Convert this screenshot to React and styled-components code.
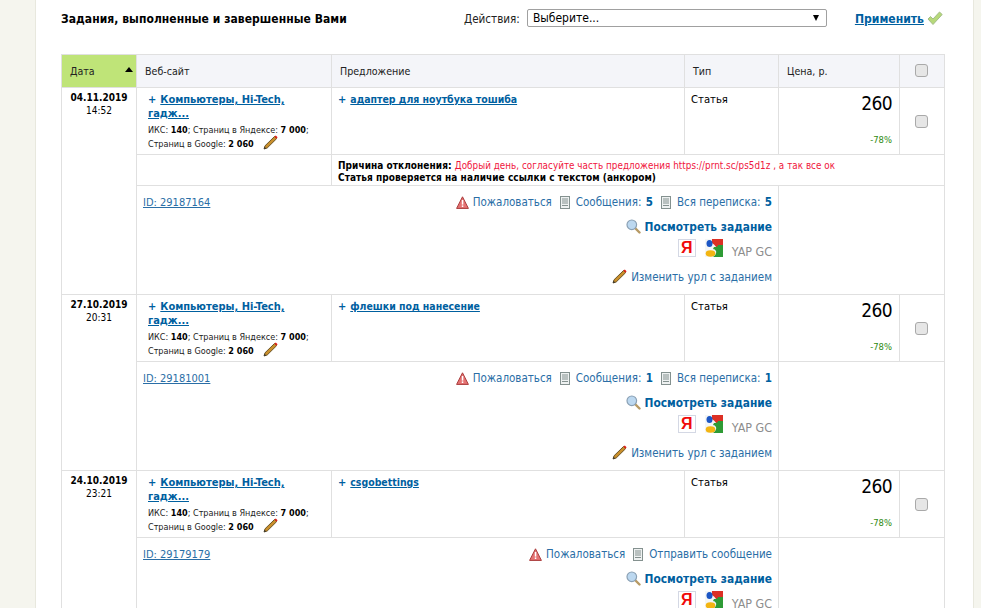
import React from 'react';
import styled, { createGlobalStyle } from 'styled-components';

const GlobalStyle = createGlobalStyle`
    html, body {
        margin: 0;
        padding: 0;
        height: 100%;
        overflow: hidden;
        background-color: #f5f5ee;
        font-family: "DejaVu Sans Condensed", "DejaVu Sans", sans-serif;
        font-stretch: condensed;
        color: #000;
    }
`;

const Page = styled.div`
    margin-left: 35px;
    width: 912px;
    height: 608px;
    overflow: hidden;
    background-color: #fff;
    border-left: 1px solid #e8e8de;
    border-right: 1px solid #e8e8de;
    padding-left: 25px;
`;

const TopBar = styled.div`
    height: 54px;
    display: flex;
    align-items: flex-start;
    padding-top: 9px;
    box-sizing: border-box;
`;

const Title = styled.div`
    width: 403px;
    padding-top: 3px;
    font-size: 12px;
    letter-spacing: 0.05px;
    font-weight: bold;
`;

const ActionLabel = styled.span`
    font-size: 11.6px;
    color: #222;
    padding-top: 3px;
    margin-right: 7px;
`;

const FakeSelect = styled.div`
    width: 300px;
    height: 18px;
    border: 1px solid #a0a0a0;
    border-radius: 2px;
    box-sizing: border-box;
    padding: 0 5px;
    display: flex;
    align-items: center;
    justify-content: space-between;
    font-size: 12px;
`;

const SelectArrow = styled.i`
    width: 0;
    height: 0;
    border-left: 3px solid transparent;
    border-right: 3px solid transparent;
    border-top: 6px solid #000;
    margin-right: 2px;
`;

const ApplyLink = styled.a`
    margin-left: 28px;
    padding-top: 3px;
    font-size: 12.1px;
    font-weight: bold;
    color: #00609f;
    text-decoration: underline;
`;

const ApplyIcon = styled.svg`
    margin: 2px 0 0 3px;
`;

const Table = styled.table`
    border-collapse: collapse;
    table-layout: fixed;
    width: 883px;
    font-size: 11px;

    td, th {
        border: 1px solid #e0e0e0;
        padding: 0;
        vertical-align: top;
        box-sizing: border-box;
    }
`;

const Head = styled.th`
    height: 33px;
    vertical-align: middle !important;
    text-align: ${({ $center }) => ($center ? 'center' : 'left')};
    font-weight: normal;
    font-size: 10.6px;
    padding-left: ${({ $center }) => ($center ? '0' : '8px')} !important;
    padding-right: ${({ $center }) => ($center ? '1px' : '0')} !important;
    padding-bottom: ${({ $center }) => ($center ? '2px' : '0')} !important;
    color: #222;
    background-color: ${({ $active }) => ($active ? '#bfe478' : '#f4f5f9')};
    position: relative;
`;

const SortArrow = styled.i`
    position: absolute;
    top: 12px;
    right: 3px;
    width: 0;
    height: 0;
    border-left: 4px solid transparent;
    border-right: 4px solid transparent;
    border-bottom: 5px solid #000;
`;

const DateCell = styled.td`
    text-align: center;
    padding-top: 3px !important;
    font-size: 10px;
    line-height: 13px;
`;

const DateText = styled.div`
    font-weight: bold;
`;

const SiteCell = styled.td`
    padding: 5px 6px 0 11px !important;
    height: 67px;
    overflow: hidden;
`;

const Plus = styled.span`
    color: #00609f;
    font-weight: bold;
    margin-right: 4px;
`;

const BoldLink = styled.a`
    color: #00609f;
    font-weight: bold;
    font-size: ${({ $small }) => ($small ? '10.45px' : '11px')};
    text-decoration: underline;
`;

const SiteName = styled.div`
    line-height: 14px;
    font-size: 11px;
`;

const Stats = styled.div`
    margin-top: 2px;
    font-size: 9px;
    line-height: 14px;
    color: #222;
    white-space: nowrap;

    b {
        color: #000;
    }

    svg {
        vertical-align: top;
        margin: -2px 0 -2px 9px;
    }
`;

const OfferCell = styled.td`
    padding: 4px 6px 0 6px !important;
    line-height: 14px;
`;

const TypeCell = styled.td`
    padding: 5px 0 0 6px !important;
    font-size: 11.2px;
    line-height: 14px;
`;

const PriceCell = styled.td`
    padding: 3px 7px 0 0 !important;
    text-align: right;
`;

const PriceValue = styled.div`
    font-size: 19px;
    letter-spacing: -0.6px;
    line-height: 24px;
`;

const Discount = styled.div`
    margin-top: 19px;
    font-size: 9.4px;
    line-height: 12px;
    color: #2f8a10;
`;

const CheckCell = styled.td`
    text-align: center;
    vertical-align: middle !important;
    padding-right: 1px !important;
`;

const Box = styled.span`
    display: inline-block;
    width: 13px;
    height: 13px;
    box-sizing: border-box;
    border: 1px solid #a9a9a9;
    border-radius: 3px;
    background-color: #e6e6e6;
    vertical-align: middle;
`;

const ReasonCell = styled.td`
    height: 31px;
    padding: 5px 0 0 6px !important;
    font-size: 10px;
    letter-spacing: 0.05px;
    line-height: 12px;
    font-weight: bold;
`;

const ReasonText = styled.span`
    font-weight: normal;
    font-size: 9.75px;
    color: #f0143c;
`;

const ActionsCell = styled.td`
    padding: 0 6px !important;
    height: 108px;
`;

const ActionsInner = styled.div`
    display: flex;
    flex-direction: column;
    height: 108px;
    font-size: 11.5px;
    color: #00609f;
`;

const TopLine = styled.div`
    display: flex;
    height: 28px;
    padding-top: 9px;
    box-sizing: border-box;
    justify-content: space-between;
    line-height: 15px;
`;

const IdLink = styled.a`
    color: #2a6ea6;
    text-decoration: underline;
    font-size: 11px;
`;

const LinkGroup = styled.div`
    display: flex;
    align-items: center;
    height: 15px;
`;

const ActionItem = styled.span`
    display: inline-flex;
    align-items: center;
    gap: ${({ $warn }) => ($warn ? '4px' : '6px')};
    margin-left: 8px;
    color: #2a6ea6;

    b {
        color: #00609f;
        margin-left: 1px;
    }
`;

const Line = styled.div`
    display: flex;
    justify-content: flex-end;
    align-items: center;
    height: 25px;
    gap: 4px;
    color: #2a6ea6;
`;

const IconLine = styled(Line)`
    gap: 9px;
    align-items: flex-start;
`;

const ViewTask = styled.b`
    color: #00609f;
    font-size: 11.85px;
`;

const YandexBox = styled.span`
    width: 18px;
    height: 18px;
    box-sizing: border-box;
    border: 1px solid #d4d8e4;
    background-color: #fff;
    color: #f00a0a;
    font: bold 16px/16px "Liberation Sans", sans-serif;
    text-align: center;
`;

const Muted = styled.span`
    color: #8d8d8d;
    font-size: 12.4px;
    margin-top: 5px;
    line-height: 15px;
`;

const rows = [
    {
        date: '04.11.2019', time: '14:52', offer: 'адаптер для ноутбука тошиба', id: '29187164',
        reason: true, messages: 5, all: 5,
    },
    {
        date: '27.10.2019', time: '20:31', offer: 'флешки под нанесение', id: '29181001',
        messages: 1, all: 1,
    },
    {
        date: '24.10.2019', time: '23:21', offer: 'csgobettings', id: '29179179',
    },
];

const Pencil = () => (
    <svg width="15" height="15" viewBox="0 0 15 15">
        <path d="M1 14 L2 10.8 L11.5 1.5 L13.6 3.7 L4.2 13 Z" fill="#c98f2c" stroke="#5f4a1c" strokeWidth="0.9" />
        <path d="M11.4 1.6 L12.8 0.4 L14.6 2.2 L13.4 3.7 Z" fill="#e0201a" />
        <path d="M1 14 L1.6 11.8 L3.2 13.4 Z" fill="#333" />
    </svg>
);

const Warning = () => (
    <svg width="13" height="13" viewBox="0 0 13 13">
        <path d="M6.5 0.8 L12.4 12.4 H0.6 Z" fill="#e57373" stroke="#a83a3a" strokeWidth="1" strokeLinejoin="round" />
        <rect x="5.8" y="4" width="1.5" height="4.6" fill="#fff" />
        <rect x="5.8" y="9.4" width="1.5" height="1.6" fill="#fff" />
    </svg>
);

const Doc = () => (
    <svg width="10" height="13" viewBox="0 0 10 13">
        <rect x="0.5" y="0.5" width="9" height="12" fill="#eef1f1" stroke="#84918f" />
        <path d="M2 3 H8 M2 5 H8 M2 7 H8 M2 9.5 H8" stroke="#84918f" strokeWidth="1" />
    </svg>
);

const Magnifier = () => (
    <svg width="15" height="15" viewBox="0 0 15 15">
        <path d="M9 9 L13.5 13.5" stroke="#b79a64" strokeWidth="2.4" strokeLinecap="round" />
        <circle cx="5.8" cy="5.8" r="4.8" fill="#bcd8f0" stroke="#8aa0b4" strokeWidth="1.2" />
    </svg>
);

const GoogleIcon = () => (
    <svg width="18" height="18" viewBox="0 0 18 18">
        <rect width="18" height="18" fill="#f4f6f6" />
        <path d="M7 0 H18 V9 H12 Q9 5 7 4 Z" fill="#dc3025" />
        <path d="M9 8 Q13 8 13 6 H18 V18 H8 Q12 15 11 12 Q10 10 8 10 Z" fill="#2e9b35" />
        <ellipse cx="4.5" cy="4.5" rx="3" ry="3.6" fill="#1c56c4" />
        <ellipse cx="5.5" cy="14.5" rx="4.8" ry="3.2" fill="#f3b512" />
    </svg>
);

const Check = () => (
    <ApplyIcon width="16" height="15" viewBox="0 0 16 15">
        <path d="M1 8 L3.5 5.5 L6 8 L12.5 1 L15.2 3.5 L6 13.5 Z" fill="#b7d97a" stroke="#a3bd88" strokeWidth="1" />
    </ApplyIcon>
);

function Row({ row }) {
    const span = row.reason ? 3 : 2;
    return (
        <>
            <tr>
                <DateCell rowSpan={span}>
                    <DateText>{row.date}</DateText>
                    {row.time}
                </DateCell>
                <SiteCell>
                    <SiteName>
                        <Plus>+</Plus>
                        <BoldLink>Компьютеры, Hi-Tech, гадж...</BoldLink>
                    </SiteName>
                    <Stats>
                        ИКС: <b>140</b>; Страниц в Яндексе: <b>7 000</b>;<br />
                        Страниц в Google: <b>2 060</b><Pencil />
                    </Stats>
                </SiteCell>
                <OfferCell>
                    <Plus>+</Plus>
                    <BoldLink $small>{row.offer}</BoldLink>
                </OfferCell>
                <TypeCell>Статья</TypeCell>
                <PriceCell>
                    <PriceValue>260</PriceValue>
                    <Discount>-78%</Discount>
                </PriceCell>
                <CheckCell><Box /></CheckCell>
            </tr>
            {row.reason && (
                <tr>
                    <td />
                    <ReasonCell colSpan={4}>
                        Причина отклонения: <ReasonText>Добрый день, согласуйте часть предложения https://prnt.sc/ps5d1z , а так все ок</ReasonText>
                        <br />
                        Статья проверяется на наличие ссылки с текстом (анкором)
                    </ReasonCell>
                </tr>
            )}
            <tr>
                <ActionsCell colSpan={3}>
                    <ActionsInner>
                        <TopLine>
                            <IdLink>ID: {row.id}</IdLink>
                            <LinkGroup>
                                <ActionItem $warn><Warning />Пожаловаться</ActionItem>
                                {row.messages ? (
                                    <>
                                        <ActionItem><Doc /><span>Сообщения: <b>{row.messages}</b></span></ActionItem>
                                        <ActionItem><Doc /><span>Вся переписка: <b>{row.all}</b></span></ActionItem>
                                    </>
                                ) : (
                                    <ActionItem><Doc />Отправить сообщение</ActionItem>
                                )}
                            </LinkGroup>
                        </TopLine>
                        <Line><Magnifier /><ViewTask>Посмотреть задание</ViewTask></Line>
                        <IconLine><YandexBox>Я</YandexBox><GoogleIcon /><Muted>YAP GC</Muted></IconLine>
                        <Line><Pencil />Изменить урл с заданием</Line>
                    </ActionsInner>
                </ActionsCell>
                <td colSpan={2} />
            </tr>
        </>
    );
}

export default function App() {
    return (
        <>
            <GlobalStyle />
            <Page>
                <TopBar>
                    <Title>Задания, выполненные и завершенные Вами</Title>
                    <ActionLabel>Действия:</ActionLabel>
                    <FakeSelect>Выберите...<SelectArrow /></FakeSelect>
                    <ApplyLink>Применить</ApplyLink>
                    <Check />
                </TopBar>
                <Table>
                    <colgroup>
                        <col width="75" />
                        <col width="195" />
                        <col width="353" />
                        <col width="94" />
                        <col width="121" />
                        <col width="45" />
                    </colgroup>
                    <thead>
                        <tr>
                            <Head $active>Дата<SortArrow /></Head>
                            <Head>Веб-сайт</Head>
                            <Head>Предложение</Head>
                            <Head>Тип</Head>
                            <Head>Цена, р.</Head>
                            <Head $center><Box /></Head>
                        </tr>
                    </thead>
                    <tbody>
                        {rows.map((row) => <Row key={row.id} row={row} />)}
                    </tbody>
                </Table>
            </Page>
        </>
    );
}
